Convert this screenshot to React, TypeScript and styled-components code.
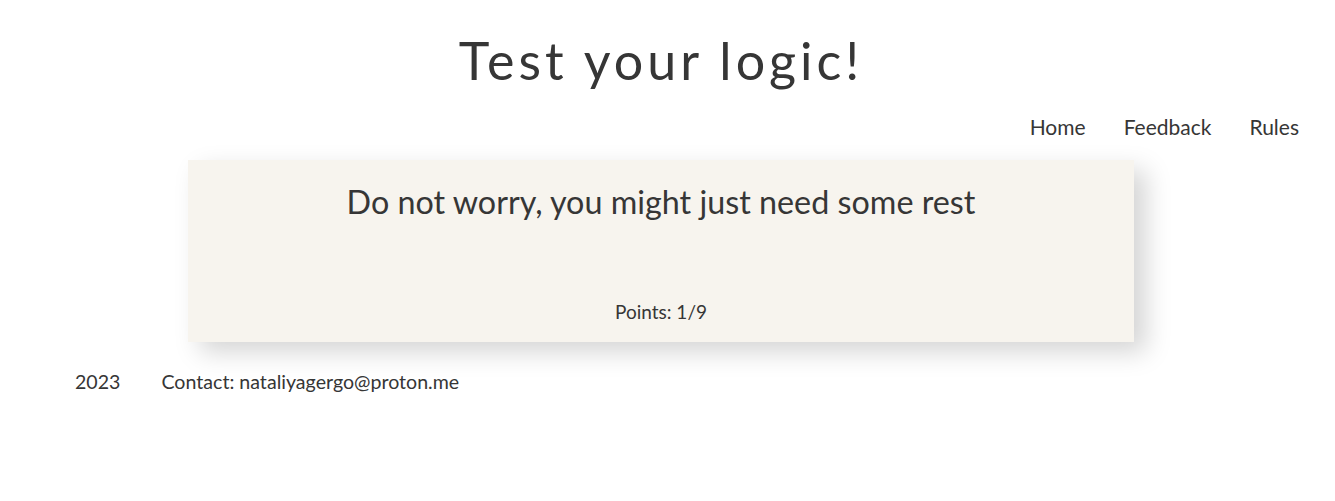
import React from 'react'

import styled, { createGlobalStyle } from 'styled-components'

const GlobalStyle = createGlobalStyle`
  html, body {
    margin: 0;
    padding: 0;
    background: #ffffff;
  }
  body {
    font-family: 'Lato', 'Noto Sans', sans-serif;
    color: #363636;
  }
`

const Page = styled.div`
  width: 1322px;
  display: flex;
  flex-direction: column;
`

const Title = styled.h1`
  margin: 28px 0 0;
  font-size: 52px;
  font-weight: 400;
  letter-spacing: 4px;
  text-align: center;
  line-height: 64px;
`

const Nav = styled.nav`
  display: flex;
  justify-content: flex-end;
  gap: 38px;
  padding: 20px 23px 0 0;
`

const NavLink = styled.a`
  font-size: 21px;
  color: #363636;
  text-decoration: none;
  line-height: 30px;
`

const Card = styled.section`
  margin: 18px 188px 0;
  height: 182px;
  background: #f7f4ee;
  box-shadow: 12px 10px 24px rgba(0, 0, 0, 0.17);
  display: flex;
  flex-direction: column;
  align-items: center;
`

const Message = styled.h2`
  margin: 22px 0 0;
  font-size: 32.3px;
  font-weight: 400;
  line-height: 40px;
`

const Points = styled.p`
  margin: auto 0 18px;
  font-size: 19px;
  line-height: 24px;
`

const Footer = styled.footer`
  display: flex;
  gap: 41px;
  padding: 28px 0 0 75px;
  font-size: 19.6px;
  line-height: 24px;
`

const App: React.FC = () => {
  return (
    <Page>
      <GlobalStyle />
      <Title>Test your logic!</Title>
      <Nav>
        <NavLink href="#">Home</NavLink>
        <NavLink href="#">Feedback</NavLink>
        <NavLink href="#">Rules</NavLink>
      </Nav>
      <Card>
        <Message>Do not worry, you might just need some rest</Message>
        <Points>Points: 1/9</Points>
      </Card>
      <Footer>
        <span>2023</span>
        <span>Contact: nataliyagergo@proton.me</span>
      </Footer>
    </Page>
  )
}

export default App
